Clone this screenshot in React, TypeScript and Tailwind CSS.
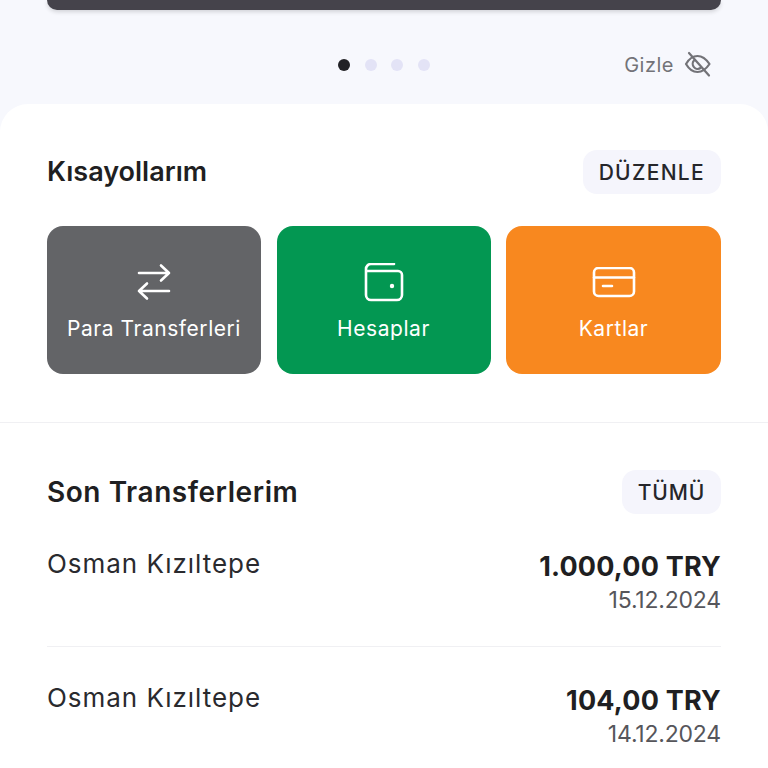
const FONT = "font-['Inter','Liberation_Sans',sans-serif]"

function HideIcon() {
  return (
    <svg width="27" height="27" viewBox="0 0 27 27" fill="none" stroke="currentColor" strokeWidth="2.2" strokeLinecap="round" strokeLinejoin="round">
      <path d="M2 13c3-5.200 7-8 11.500-8S22 7.800 25.500 13c-3.500 5.200-7.500 8-12 8S5 18.200 2 13Z" />
      <path d="M10 9.500a5 5 0 0 0 6.500 7.500" />
      <path d="M5 2l20 22.500" />
    </svg>
  )
}

function SwapIcon() {
  return (
    <svg width="34" height="34" viewBox="0 1 34 34" fill="none" stroke="currentColor" strokeWidth="2.600" strokeLinecap="round" strokeLinejoin="round" className="overflow-visible">
      <path d="M2 8h30M24 0.500L32 8l-8 7.500" />
      <path d="M32 26H2M10 18.500L2 26l8 7.500" />
    </svg>
  )
}

function WalletIcon() {
  return (
    <svg width="40" height="40" viewBox="0 1 40 40" fill="none" stroke="currentColor" strokeWidth="2.600" strokeLinecap="round" strokeLinejoin="round">
      <path d="M30 2H7a5 5 0 0 0-5 5v26a5 5 0 0 0 5 5h26a5 5 0 0 0 5-5V13a4 4 0 0 0-4-4H2" />
      <circle cx="28" cy="24" r="2.200" fill="currentColor" stroke="none" />
    </svg>
  )
}

function CardIcon() {
  return (
    <svg width="44" height="32" viewBox="0 1 44 32" fill="none" stroke="currentColor" strokeWidth="2.600" strokeLinecap="round" strokeLinejoin="round">
      <rect x="2" y="2" width="40" height="28" rx="4.500" />
      <path d="M2 11.500h40M11 20h9" />
    </svg>
  )
}

const SHORTCUTS = [
  { label: 'Para Transferleri', bg: 'bg-[#636467]', icon: <SwapIcon /> },
  { label: 'Hesaplar', bg: 'bg-[#039752]', icon: <WalletIcon /> },
  { label: 'Kartlar', bg: 'bg-[#f8881f]', icon: <CardIcon /> },
]

const TRANSFERS = [
  { name: 'Osman Kızıltepe', amount: '1.000,00 TRY', date: '15.12.2024' },
  { name: 'Osman Kızıltepe', amount: '104,00 TRY', date: '14.12.2024' },
]

export default function App() {
  return (
    <div className={`flex h-[768px] flex-col overflow-hidden bg-[#f7f8fd] ${FONT}`}>
      {/* Balance card, scrolled off */}
      <div className="mx-[47px] h-[10px] shrink-0 rounded-b-[14px] bg-[#45434b] shadow-[0_2px_4px_rgba(0,0,0,0.15)]" />

      {/* Pager */}
      <div className="grid h-[94px] shrink-0 grid-cols-[1fr_auto_1fr] items-center px-[57px] pt-[15px]">
        <div />
        <div className="flex justify-center gap-[14.67px]">
          <span className="h-3 w-3 rounded-full bg-[#222226]" />
          <span className="h-3 w-3 rounded-full bg-[#e3e3f6]" />
          <span className="h-3 w-3 rounded-full bg-[#e3e3f6]" />
          <span className="h-3 w-3 rounded-full bg-[#e3e3f6]" />
        </div>
        <div className="flex items-center justify-end gap-[10px] text-[#737378]">
          <span className="pt-[1px] text-[20px] tracking-[0.5px]">Gizle</span>
          <HideIcon />
        </div>
      </div>

      <div className="flex-1 rounded-t-[28px] bg-white">
        {/* Shortcuts */}
        <div className="border-b border-[#f0f0f3] px-[47px] pb-[48px] pt-[46px]">
          <div className="flex items-center justify-between">
            <h2 className="text-[27px] font-semibold leading-[44px] text-[#1f1f22]">Kısayollarım</h2>
            <span className="flex h-[44px] items-center rounded-[14px] bg-[#f5f5fc] px-[16px] pt-[2px] text-[21px] font-medium tracking-[1.3px] text-[#26262a]">DÜZENLE</span>
          </div>
          <div className="mt-[32px] grid grid-cols-[214px_214px_1fr] gap-[15.5px]">
            {SHORTCUTS.map((s) => (
              <div key={s.label} className={`flex h-[148px] flex-col items-center rounded-[16px] pt-[36px] text-white ${s.bg}`}>
                <div className="flex h-[42px] items-center justify-center">{s.icon}</div>
                <span className="mt-[10px] text-[21px] leading-[30px] tracking-[0.55px]">{s.label}</span>
              </div>
            ))}
          </div>
        </div>

        {/* Recent transfers */}
        <div className="px-[47px] pt-[47px]">
          <div className="flex items-center justify-between">
            <h2 className="text-[28px] font-semibold leading-[44px] tracking-[0.55px] text-[#1f1f22]">Son Transferlerim</h2>
            <span className="flex h-[44px] items-center rounded-[14px] bg-[#f5f5fc] px-[16px] pt-[2px] text-[21px] font-medium tracking-[0.8px] text-[#26262a]">TÜMÜ</span>
          </div>
          <div className="mt-[20px]">
            {TRANSFERS.map((t, i) => (
              <div key={i} className={`flex justify-between ${i === 0 ? 'h-[113px] border-b border-[#f0f0f3]' : 'pt-[21px]'}`}>
                <span className="text-[26px] leading-[60px] tracking-[0.96px] text-[#2a2a2e]">{t.name}</span>
                <div className="flex flex-col items-end pt-[15px]">
                  <span className="text-[27px] font-bold leading-[36px] tracking-[0.2px] text-[#1f1f22]">{t.amount}</span>
                  <span className="text-[23px] leading-[31px] tracking-[-0.2px] text-[#56565b]">{t.date}</span>
                </div>
              </div>
            ))}
          </div>
        </div>
      </div>
    </div>
  )
}
